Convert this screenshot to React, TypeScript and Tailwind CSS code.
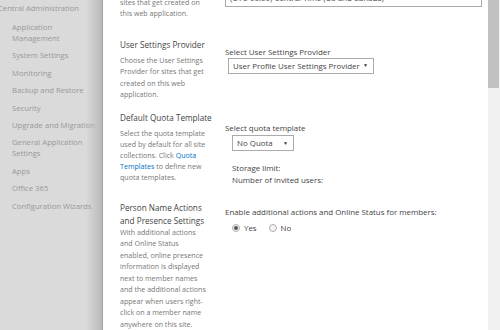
import React from "react";

const font = { fontFamily: '"Open Sans", "Noto Sans", sans-serif' };

function Select({ text, className }: { text: string; className?: string }) {
  return (
    <div className={"flex items-center justify-between border border-[#ababab] bg-white pl-[4px] pr-[5px] text-[#444] " + (className ?? "")}>
      <span className="whitespace-nowrap">{text}</span>
      <span className="text-[5px] leading-[5px] text-[#333]">▼</span>
    </div>
  );
}

function Radio({ checked, label }: { checked?: boolean; label: string }) {
  return (
    <div className="flex items-center gap-[4px]">
      <span className="flex h-[8px] w-[8px] items-center justify-center rounded-full border border-[#b0b0b0] bg-[#f4f4f4]">
        {checked && <span className="h-[4px] w-[4px] rounded-full bg-[#555]" />}
      </span>
      <span>{label}</span>
    </div>
  );
}

export default function App() {
  const nav = [
    ["Application", "Management"],
    ["System Settings"],
    ["Monitoring"],
    ["Backup and Restore"],
    ["Security"],
    ["Upgrade and Migration"],
    ["General Application", "Settings"],
    ["Apps"],
    ["Office 365"],
    ["Configuration Wizards"],
  ];
  return (
    <div className="flex h-[330px] w-[500px] overflow-hidden bg-white" style={font}>
      {/* left nav under overlay */}
      <div className="relative h-full w-[102px] shrink-0 overflow-hidden bg-[#dadada]">
        <div className="pt-[3px] text-[7.7px] leading-[11px] text-[#999]">
          <div className="ml-[-2px] whitespace-nowrap">Central Administration</div>
          <div className="mt-[8px] flex flex-col gap-[6.4px] pl-[12px]">
            {nav.map((lines, i) => (
              <div key={i}>
                {lines.map((l) => (
                  <div key={l} className="whitespace-nowrap">{l}</div>
                ))}
              </div>
            ))}
          </div>
        </div>
        <div className="absolute right-0 top-0 h-full w-[16px] bg-gradient-to-r from-[#dadada]/0 to-[#b9b9b9]" />
      </div>

      {/* dialog */}
      <div className="flex h-full flex-1 border-l border-[#a0a0a0] bg-white">
        <div className="flex-1 overflow-hidden pl-[17px]">
          {/* cut off top section */}
          <div className="mt-[-3px] grid grid-cols-[105px_1fr] items-start">
            <div className="text-[7.1px] leading-[11.3px] text-[#777]">
              <div className="whitespace-nowrap">sites that get created on</div>
              <div className="whitespace-nowrap">this web application.</div>
            </div>
            <div className="mt-[-7px]">
              <Select text="(UTC-06:00) Central Time (US and Canada)" className="h-[17px] w-[257px] text-[7.9px]" />
            </div>
          </div>

          {/* User Settings Provider */}
          <div className="mt-[18.7px] grid grid-cols-[105px_1fr] items-start">
            <div>
              <div className="whitespace-nowrap text-[8.2px] leading-[13px] text-[#444]">User Settings Provider</div>
              <div className="mt-[3.85px] text-[7.1px] leading-[11.3px] text-[#777]">
                <div className="whitespace-nowrap">Choose the User Settings</div>
                <div className="whitespace-nowrap">Provider for sites that get</div>
                <div className="whitespace-nowrap">created on this web</div>
                <div className="whitespace-nowrap">application.</div>
              </div>
            </div>
            <div className="pt-[7.5px] text-[7.9px] leading-[12px] text-[#444]">
              <div className="whitespace-nowrap">Select User Settings Provider</div>
              <Select text="User Profile User Settings Provider" className="ml-[3px] h-[16px] w-[146px]" />
            </div>
          </div>

          {/* Default Quota Template */}
          <div className="mt-[10.5px] grid grid-cols-[105px_1fr] items-start">
            <div>
              <div className="whitespace-nowrap text-[8.2px] leading-[13px] text-[#444]">Default Quota Template</div>
              <div className="mt-[3.85px] text-[7.1px] leading-[11.1px] text-[#777]">
                <div className="whitespace-nowrap">Select the quota template</div>
                <div className="whitespace-nowrap">used by default for all site</div>
                <div className="whitespace-nowrap">collections. Click <span className="text-[#0072c6]">Quota</span></div>
                <div className="whitespace-nowrap"><span className="text-[#0072c6]">Templates</span> to define new</div>
                <div className="whitespace-nowrap">quota templates.</div>
              </div>
            </div>
            <div className="pt-[11.5px] text-[7.9px] leading-[12px] text-[#444]">
              <div className="whitespace-nowrap">Select quota template</div>
              <Select text="No Quota" className="mt-[1px] ml-[7px] h-[16px] w-[62px]" />
              <div className="mt-[11px] pl-[7px]">
                <div className="whitespace-nowrap">Storage limit:</div>
                <div className="whitespace-nowrap">Number of invited users:</div>
              </div>
            </div>
          </div>

          {/* Person Name Actions */}
          <div className="mt-[14.5px] grid grid-cols-[105px_1fr] items-start">
            <div>
              <div className="text-[8.2px] leading-[13px] text-[#444]">
                <div className="whitespace-nowrap">Person Name Actions</div>
                <div className="whitespace-nowrap">and Presence Settings</div>
              </div>
              <div className="text-[7.1px] leading-[11.5px] text-[#777]">
                <div className="whitespace-nowrap">With additional actions</div>
                <div className="whitespace-nowrap">and Online Status</div>
                <div className="whitespace-nowrap">enabled, online presence</div>
                <div className="whitespace-nowrap">information is displayed</div>
                <div className="whitespace-nowrap">next to member names</div>
                <div className="whitespace-nowrap">and the additional actions</div>
                <div className="whitespace-nowrap">appear when users right-</div>
                <div className="whitespace-nowrap">click on a member name</div>
                <div className="whitespace-nowrap">anywhere on this site.</div>
              </div>
            </div>
            <div className="pt-[5.5px] text-[7.9px] leading-[12px] text-[#444]">
              <div className="whitespace-nowrap">Enable additional actions and Online Status for members:</div>
              <div className="mt-[4px] flex gap-[12px] pl-[7px]">
                <Radio checked label="Yes" />
                <Radio label="No" />
              </div>
            </div>
          </div>
        </div>

        {/* scrollbar */}
        <div className="flex h-full w-[12px] flex-col bg-[#f0f0f0]">
          <div className="h-[88px] w-[11px] bg-[#c1c1c1]" />
        </div>
      </div>
    </div>
  );
}
